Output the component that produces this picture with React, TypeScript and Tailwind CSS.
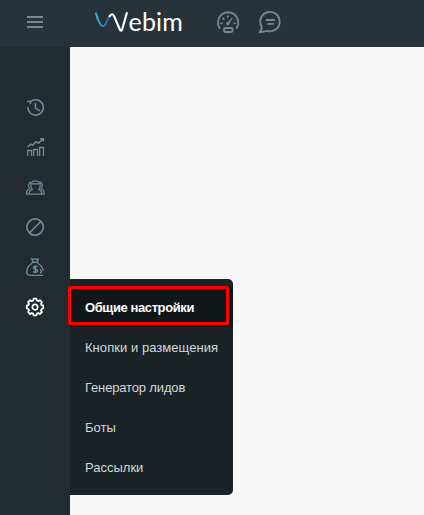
import type { ReactNode } from "react";

function Icon({ children, active = false }: { children: ReactNode; active?: boolean }) {
  return (
    <button className={`flex h-10 w-[70px] items-center justify-center ${active ? "text-white" : "text-[#718a95]"}`}>
      <svg width="20" height="20" viewBox="0 0 20 20" fill="none" stroke="currentColor" strokeWidth="1.6">
        {children}
      </svg>
    </button>
  );
}

function Logo() {
  return (
    <div className="ml-[25px] flex h-[30px] w-[89px]">
      <svg className="shrink-0" width="34" height="27" viewBox="0 0 34 27" fill="none" strokeLinecap="round">
        <defs>
          <linearGradient id="wave" x1="0" x2="1">
            <stop offset="0" stopColor="#2fc0e8" />
            <stop offset="0.5" stopColor="#238fd0" />
            <stop offset="1" stopColor="#3157b2" />
          </linearGradient>
        </defs>
        <path d="M.9 4.3C2.8 11 5.3 17.3 8.2 17.3S12 10 14.8 6.5" stroke="url(#wave)" strokeWidth="1.9" />
        <path d="M14.6 7.3C16.2 4.6 18 4.7 19.2 7.4L24.6 20C25.6 22.3 26.6 22.3 27.3 20L31.8 4" stroke="#fff" strokeWidth="2.2" />
      </svg>
      <span className="-ml-[0.5px] -mt-[3px] font-[Lato] text-[25px] leading-[30px] tracking-[0.2px] text-white">ebim</span>
    </div>
  );
}

const items = ["Общие настройки", "Кнопки и размещения", "Генератор лидов", "Боты", "Рассылки"];

export default function App() {
  return (
    <div className="flex h-[515px] w-[424px] flex-col overflow-hidden bg-[#f8f8f8] font-['Liberation_Sans',Arial,sans-serif]">
      <header className="flex h-[47px] shrink-0 items-start bg-[#283339] pt-[9px]">
        <button className="mt-[7px] flex w-[70px] flex-col items-center gap-[3px]">
          <span className="h-0.5 w-4 bg-[#718a95]" />
          <span className="h-0.5 w-4 bg-[#718a95]" />
          <span className="h-0.5 w-4 bg-[#718a95]" />
        </button>
        <Logo />
        <svg className="ml-8 mt-[2px]" width="24" height="24" viewBox="0 0 24 24" fill="none" stroke="#718a95" strokeWidth="1.8">
          <path d="M3.6 17.1A10.2 10.2 0 1 1 20.6 17.1" strokeLinecap="round" />
          <rect x="8" y="17" width="8.6" height="4" rx="1.5" />
          <path d="m11.3 12.4 4.8-5.2-3.8 6z" fill="#718a95" strokeWidth="1" />
          <circle cx="11.8" cy="12.5" r="1.7" fill="#718a95" stroke="none" />
          <path d="M5 12.3h.8M18.2 12.3h.8M7 7.4l.7.7M11.8 5.2v.8" strokeLinecap="round" />
        </svg>
        <svg className="ml-[18px] mt-px" width="24" height="25" viewBox="0 0 24 25" fill="none" stroke="#718a95" strokeWidth="1.9">
          <path d="M3.6 16.6A9.7 9.7 0 1 1 9 20.9L1.6 22.4C3.2 20.7 4 19 3.6 16.6Z" strokeLinejoin="round" />
          <path d="M8 10h9M9.3 13.9h6.5" />
        </svg>
      </header>
      <div className="flex min-h-0 flex-1">
        <nav className="flex w-[70px] shrink-0 flex-col bg-[#212b30] pt-10">
          <Icon>
            <path d="M5.2 4.9A7.7 7.7 0 1 1 2.9 9.9M2.2 4.4h3.3v2.8M10.4 6v5.1l4.4 2.6" />
          </Icon>
          <Icon>
            <path d="M2.6 19v-5.5h3.9V19M8.6 19v-6.5h3.9V19M14.6 19v-8.5h3.9V19" strokeWidth="1.3" />
            <path d="m2.6 9.8 3-2.6 2 1 3.4-3.5 2.3 1.5 4.2-3.7M15.3 1.8h2.9v2.8" strokeWidth="1.6" />
          </Icon>
          <Icon>
            <path d="M7.6 12.7C6 11 5.6 8.8 5.9 7 7 2.8 14.2 2.8 15.2 7c.3 1.8-.1 4-1.7 5.7M7.6 12.7c-2.5.4-3.6 1.9-3.8 4.5M13.5 12.7c2.4.4 3.4 1.9 3.6 4.5M6 5.2C3.7 5.6 3.1 8.4 4.1 10.5l.7 1.2c-2.3.5-3.4 2.3-3.5 5.5h18c-.1-3.2-1.2-5-3.3-5.5l.7-1.2c1-2.1.5-4.9-1.7-5.3M6.8 6.9h7.5" strokeWidth="1.2" />
          </Icon>
          <Icon>
            <circle cx="10.1" cy="10.1" r="8.2" strokeWidth="1.7" />
            <path d="m4.5 15.8 11.3-11.3" strokeWidth="1.7" />
          </Icon>
          <Icon>
            <path d="M8.1 4.8 6.8 2.1c1.6.8 2.4-.6 4 0 1 .4 1.6 0 2.5 0L12.1 4.8M6.8 5.2h6.5M7.4 6C4 8 1.7 11.6 1.7 15c0 2.4 1.4 3.4 3.7 3.4H18M12.5 6c3.2 1.8 5.3 4.6 5.9 7.8M15.2 12.2c1.4 2 1.2 3.4.2 4.3" strokeWidth="1.4" />
            <path d="M12.4 9.8c-1.2-1-4-.8-4 .9 0 2 4.2.9 4.2 3 0 1.8-3 2-4.5.8M10.4 8.2v7.9" strokeWidth="1.4" />
          </Icon>
          <Icon active>
            <g transform="translate(-.3 -.3)">
              <path d="M8.4 3.8 8.9 2h2.8l.5 1.8 1.4.6 1.6-.9 2 2-.9 1.6.6 1.4 1.6.5v2.8l-1.6.5-.6 1.4.9 1.6-2 2-1.6-.9-1.4.6-.5 1.6H8.9L8.4 17l-1.4-.6-1.6.9-2-2 .9-1.6-.6-1.4-1.6-.5V9l1.6-.5.6-1.4-.9-1.6 2-2 1.6.9Z" strokeWidth="1.8" strokeLinejoin="round" />
              <circle cx="10.3" cy="10.4" r="2.7" strokeWidth="1.7" />
            </g>
          </Icon>
        </nav>
        <main className="flex-1 pt-[232px]">
          <div className="relative h-[216px] w-[163px] rounded-r-[5px] bg-[#1c2327] pt-2 text-[13px] text-[#cfd8dc]">
            {items.map((item, i) => (
              <a key={item} className={`flex h-10 items-center whitespace-nowrap pl-[15px] pt-0.5 ${i === 0 ? "bg-[#111619] font-bold tracking-[-0.4px] text-white" : i === 1 ? "tracking-[0.05px]" : i === 2 ? "tracking-[-0.15px]" : ""}`}>
                {item}
              </a>
            ))}
            <div className="absolute -left-0.5 top-[7px] h-[39px] w-[161px] rounded-[2px] border-3 border-[#ff0000]" />
          </div>
        </main>
      </div>
    </div>
  );
}
